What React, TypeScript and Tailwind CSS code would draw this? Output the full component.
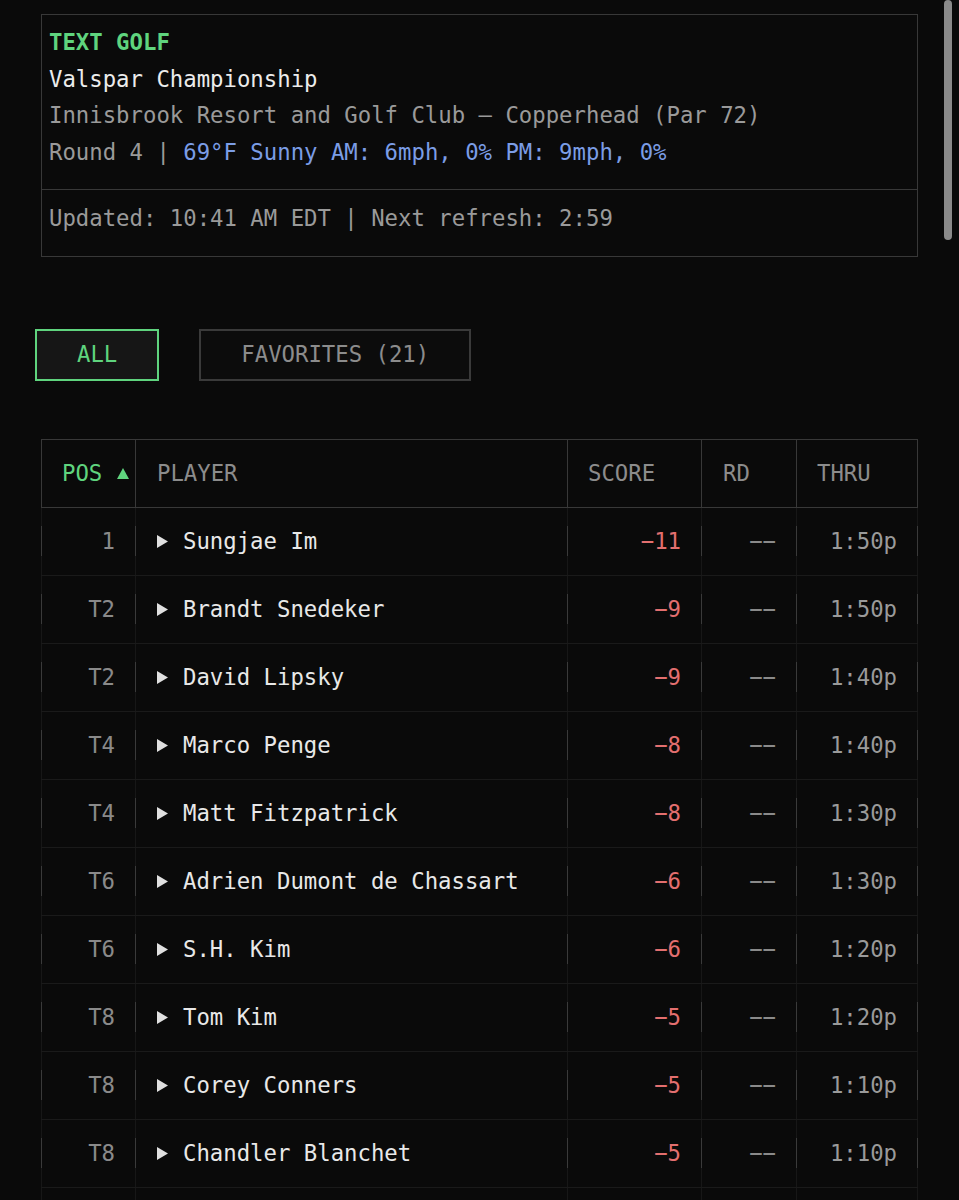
const rows = [
  { pos: "1", name: "Sungjae Im", score: "−11", thru: "1:50p" },
  { pos: "T2", name: "Brandt Snedeker", score: "−9", thru: "1:50p" },
  { pos: "T2", name: "David Lipsky", score: "−9", thru: "1:40p" },
  { pos: "T4", name: "Marco Penge", score: "−8", thru: "1:40p" },
  { pos: "T4", name: "Matt Fitzpatrick", score: "−8", thru: "1:30p" },
  { pos: "T6", name: "Adrien Dumont de Chassart", score: "−6", thru: "1:30p" },
  { pos: "T6", name: "S.H. Kim", score: "−6", thru: "1:20p" },
  { pos: "T8", name: "Tom Kim", score: "−5", thru: "1:20p" },
  { pos: "T8", name: "Corey Conners", score: "−5", thru: "1:10p" },
  { pos: "T8", name: "Chandler Blanchet", score: "−5", thru: "1:10p" },
];

// bright segment at text height, faint line for the rest of the row
function Sep({ head = false }: { head?: boolean }) {
  if (head) return <div className="w-px self-stretch bg-[#383838]" />;
  return (
    <div className="flex w-px self-stretch items-center bg-[#171717]">
      <div className="h-[30px] w-px bg-[#3a3a3a]" />
    </div>
  );
}

function FaintSep() {
  return <div className="w-px self-stretch bg-[#171717]" />;
}

export default function App() {
  return (
    <div className="relative h-screen overflow-hidden bg-[#0a0a0a] font-['DejaVu_Sans_Mono','Liberation_Mono',monospace] text-[22.3px]">
      <div className="px-[41px] pt-[14px]">
        {/* Header box */}
        <section className="border border-[#383838]">
          <div className="pl-[7px] pt-[9px] pb-[18px] leading-[36.7px]">
            <div className="font-bold text-[#5fd47e]">TEXT GOLF</div>
            <div className="text-[#ececec]">Valspar Championship</div>
            <div className="text-[#9a9a9a]">Innisbrook Resort and Golf Club — Copperhead (Par 72)</div>
            <div className="text-[#9a9a9a]">
              Round 4 | <span className="text-[#7b9de6]">69°F Sunny AM: 6mph, 0% PM: 9mph, 0%</span>
            </div>
          </div>
          <div className="border-t border-[#383838] pl-[7px] pt-[10px] pb-[19px] leading-[37px] text-[#9a9a9a]">
            Updated: 10:41 AM EDT | Next refresh: 2:59
          </div>
        </section>

        {/* Filter tabs */}
        <div className="-ml-[6px] mt-[72px] flex gap-10">
          <button className="flex h-[52px] items-center border-2 border-[#5fd47e] bg-[#161616] px-10 text-[#5fd47e]">
            ALL
          </button>
          <button className="flex h-[52px] items-center border-2 border-[#3a3a3a] bg-[#0c0c0c] px-10 text-[#8c8c8c]">
            FAVORITES (21)
          </button>
        </div>

        {/* Leaderboard */}
        <div className="mt-[58px] border-t border-[#383838]">
          <div className="flex h-[68px] items-stretch border-b border-[#383838] text-[#8c8c8c]">
            <Sep head />
            <div className="flex w-[93px] items-center pl-[20px] text-[#5fd47e]">
              POS&nbsp;
              <svg width="12" height="11" viewBox="0 0 12 11" className="ml-[1px]">
                <polygon points="6,0 12,11 0,11" fill="#5fd47e" />
              </svg>
            </div>
            <Sep head />
            <div className="flex flex-1 items-center pl-[21px]">PLAYER</div>
            <Sep head />
            <div className="flex w-[133px] items-center pl-[20px]">SCORE</div>
            <Sep head />
            <div className="flex w-[94px] items-center pl-[21px]">RD</div>
            <Sep head />
            <div className="flex w-[120px] items-center pl-[20px]">THRU</div>
            <Sep head />
          </div>

          {rows.map((r, i) => (
            <div key={i} className="flex h-[68px] items-stretch border-b border-[#1a1a1a]">
              <Sep />
              <div className="flex w-[93px] items-center justify-end pr-[20px] text-[#8a8a8a]">{r.pos}</div>
              <Sep />
              <div className="flex flex-1 items-center pl-[21px] text-[#e8e8e8]">
                <svg width="11" height="13" viewBox="0 0 11 13" className="mr-[15px] shrink-0">
                  <polygon points="0,0 11,6.5 0,13" fill="#e0e0e0" />
                </svg>
                {r.name}
              </div>
              <Sep />
              <div className="flex w-[133px] items-center justify-end pr-[20px] text-[#e36f6f]">{r.score}</div>
              <Sep />
              <div className="flex w-[94px] items-center justify-end pr-[20px] text-[#8a8a8a]">−−</div>
              <Sep />
              <div className="flex w-[120px] items-center justify-end pr-[20px] text-[#9a9a9a]">{r.thru}</div>
              <Sep />
            </div>
          ))}

          {/* next row, below the fold */}
          <div className="flex h-[68px] items-stretch">
            <FaintSep />
            <div className="w-[93px]" />
            <FaintSep />
            <div className="flex-1" />
            <FaintSep />
            <div className="w-[133px]" />
            <FaintSep />
            <div className="w-[94px]" />
            <FaintSep />
            <div className="w-[120px]" />
            <FaintSep />
          </div>
        </div>
      </div>

      {/* overlay scrollbar */}
      <div className="absolute right-[7px] top-0 h-[240px] w-[8px] rounded-full bg-[#8a8a8a]" />
    </div>
  );
}
